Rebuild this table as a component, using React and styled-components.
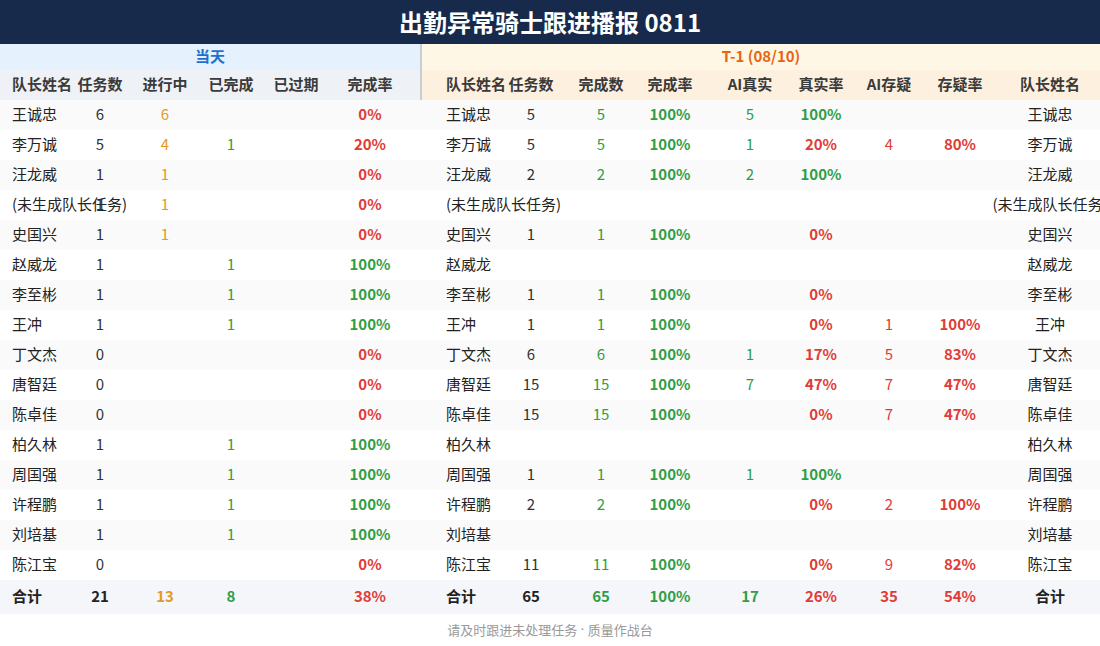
import React from "react";
import styled, { createGlobalStyle } from "styled-components";

const GlobalStyle = createGlobalStyle`
  html, body { margin: 0; padding: 0; background: #ffffff; }
  body { font-family: "Noto Sans CJK SC", "Noto Sans", "Liberation Sans", sans-serif; }
`;

const RED = "#e03c37";
const GREEN = "#2f9e46";
const ORANGE = "#e39a22";
const DARK = "#333333";

const COLS =
  "68px 64px 66px 66px 64px 84px 10px 74px 70px 70px 68px 92px 50px 86px 56px 124px";

const LEFT_HEAD_BG = "#eef1f6";
const RIGHT_HEAD_BG = "#fdf0df";
const DIVIDER = "#c9ced6";

const Page = styled.div`
  width: 1100px;
  height: 646px;
  overflow: hidden;
  display: flex;
  flex-direction: column;
`;

const TitleBar = styled.div`
  height: 44px;
  flex: none;
  background: #172a4b;
  color: #ffffff;
  font-size: 24px;
  font-weight: 700;
  display: flex;
  align-items: center;
  justify-content: center;
  padding-bottom: 2px;
  box-sizing: border-box;
`;

const GroupBar = styled.div`
  display: flex;
  height: 26px;
  flex: none;
`;

const GroupCell = styled.div`
  width: ${(p) => (p.$w ? `${p.$w}px` : "auto")};
  flex: ${(p) => (p.$w ? "none" : "1")};
  background: ${(p) => p.$bg};
  color: ${(p) => p.$color};
  border-right: ${(p) => (p.$divider ? `2px solid ${DIVIDER}` : "none")};
  font-size: 15px;
  font-weight: 700;
  display: flex;
  align-items: center;
  justify-content: center;
  padding-bottom: 3px;
  box-sizing: border-box;
`;

const Row = styled.div`
  display: grid;
  grid-template-columns: ${COLS};
  width: 1112px;
  height: ${(p) => p.$h}px;
  flex: none;
  background: ${(p) => p.$bg || "transparent"};
  align-items: center;
`;

const HeadRow = styled(Row)`
  background: linear-gradient(
    to right,
    ${LEFT_HEAD_BG} 0,
    ${LEFT_HEAD_BG} 420px,
    ${DIVIDER} 420px,
    ${DIVIDER} 422px,
    ${RIGHT_HEAD_BG} 422px
  );
`;

const HeadCell = styled.div`
  text-align: ${(p) => p.$align};
  padding-left: ${(p) => p.$pl || 0}px;
  padding-bottom: 3px;
  white-space: nowrap;
  font-size: 15px;
  font-weight: 700;
  color: #3a3a3a;
`;

const Cell = styled.div`
  white-space: nowrap;
  text-align: ${(p) => p.$align};
  padding-left: ${(p) => p.$pl || 0}px;
  padding-bottom: 4px;
  font-size: 15px;
  font-weight: ${(p) => (p.$bold ? 700 : 400)};
  color: ${(p) => p.$color};
`;

const Footer = styled.div`
  flex: 1;
  display: flex;
  align-items: center;
  justify-content: center;
  padding-bottom: 2px;
  font-size: 13px;
  color: #9a9a9a;
  white-space: pre;
`;

const Sep = styled.span`
  font-family: "Noto Sans", "Liberation Sans", sans-serif;
`;

const leftHeads = ["队长姓名", "任务数", "进行中", "已完成", "已过期", "完成率"];
const rightHeads = ["队长姓名", "任务数", "完成数", "完成率", "AI真实", "真实率", "AI存疑", "存疑率", "队长姓名"];

// left: name, tasks, inprog, done, overdue, rate
// right: tasks, done, rate, aiReal, realRate, aiDoubt, doubtRate
const rows = [
  ["王诚忠", "6", "6", "", "", "0%", "5", "5", "100%", "5", "100%", "", ""],
  ["李万诚", "5", "4", "1", "", "20%", "5", "5", "100%", "1", "20%", "4", "80%"],
  ["汪龙威", "1", "1", "", "", "0%", "2", "2", "100%", "2", "100%", "", ""],
  ["(未生成队长任务)", "1", "1", "", "", "0%", "", "", "", "", "", "", ""],
  ["史国兴", "1", "1", "", "", "0%", "1", "1", "100%", "", "0%", "", ""],
  ["赵威龙", "1", "", "1", "", "100%", "", "", "", "", "", "", ""],
  ["李至彬", "1", "", "1", "", "100%", "1", "1", "100%", "", "0%", "", ""],
  ["王冲", "1", "", "1", "", "100%", "1", "1", "100%", "", "0%", "1", "100%"],
  ["丁文杰", "0", "", "", "", "0%", "6", "6", "100%", "1", "17%", "5", "83%"],
  ["唐智廷", "0", "", "", "", "0%", "15", "15", "100%", "7", "47%", "7", "47%"],
  ["陈卓佳", "0", "", "", "", "0%", "15", "15", "100%", "", "0%", "7", "47%"],
  ["柏久林", "1", "", "1", "", "100%", "", "", "", "", "", "", ""],
  ["周国强", "1", "", "1", "", "100%", "1", "1", "100%", "1", "100%", "", ""],
  ["许程鹏", "1", "", "1", "", "100%", "2", "2", "100%", "", "0%", "2", "100%"],
  ["刘培基", "1", "", "1", "", "100%", "", "", "", "", "", "", ""],
  ["陈江宝", "0", "", "", "", "0%", "11", "11", "100%", "", "0%", "9", "82%"],
];

const total = ["合计", "21", "13", "8", "", "38%", "65", "65", "100%", "17", "26%", "35", "54%"];

const rateColor = (v) => (v === "100%" ? GREEN : RED);

function buildCells(r, isTotal) {
  const [name, t, ip, dn, od, rt, rT, rD, rR, aiR, rRate, aiD, dRate] = r;
  const b = isTotal;
  return [
    { v: name, align: "left", pl: 12, color: "#222", bold: b },
    { v: t, align: "center", color: isTotal ? "#222" : DARK, bold: b },
    { v: ip, align: "center", color: ORANGE, bold: b },
    { v: dn, align: "center", color: GREEN, bold: b },
    { v: od, align: "center", color: DARK, bold: b },
    { v: rt, align: "center", color: rateColor(rt), bold: true },
    { v: "", align: "center", color: DARK },
    { v: name, align: "left", pl: 24, color: "#222", bold: b },
    { v: rT, align: "center", color: isTotal ? "#222" : DARK, bold: b },
    { v: rD, align: "center", color: GREEN, bold: b },
    { v: rR, align: "center", color: rateColor(rR), bold: true },
    { v: aiR, align: "center", color: GREEN, bold: b },
    { v: rRate, align: "center", color: rateColor(rRate), bold: true },
    { v: aiD, align: "center", color: RED, bold: b },
    { v: dRate, align: "center", color: RED, bold: true },
    { v: name, align: "center", color: "#222", bold: b },
  ];
}

export default function App() {
  return (
    <>
      <GlobalStyle />
      <Page>
        <TitleBar>出勤异常骑士跟进播报 0811</TitleBar>
        <GroupBar>
          <GroupCell $w={422} $bg="#e5f1fd" $color="#1f6fd1" $divider>
            当天
          </GroupCell>
          <GroupCell $bg="#fff7e5" $color="#e8650f">
            T-1 (08/10)
          </GroupCell>
        </GroupBar>
        <HeadRow $h={30}>
          {leftHeads.map((h, i) => (
            <HeadCell key={`l${i}`} $align={i === 0 ? "left" : "center"} $pl={i === 0 ? 12 : 0}>
              {h}
            </HeadCell>
          ))}
          <HeadCell $align="center" />
          {rightHeads.map((h, i) => (
            <HeadCell key={`r${i}`} $align={i === 0 ? "left" : "center"} $pl={i === 0 ? 24 : 0}>
              {h}
            </HeadCell>
          ))}
        </HeadRow>
        {rows.map((r, ri) => (
          <Row key={ri} $h={30} $bg={ri % 2 === 0 ? "#fafafa" : "#ffffff"}>
            {buildCells(r, false).map((c, ci) => (
              <Cell key={ci} $align={c.align} $pl={c.pl} $color={c.color} $bold={c.bold}>
                {c.v}
              </Cell>
            ))}
          </Row>
        ))}
        <Row $h={34} $bg="#f4f6fa">
          {buildCells(total, true).map((c, ci) => (
            <Cell key={ci} $align={c.align} $pl={c.pl} $color={c.color} $bold={c.bold}>
              {c.v}
            </Cell>
          ))}
        </Row>
        <Footer>
          请及时跟进未处理任务<Sep> · </Sep>质量作战台
        </Footer>
      </Page>
    </>
  );
}
